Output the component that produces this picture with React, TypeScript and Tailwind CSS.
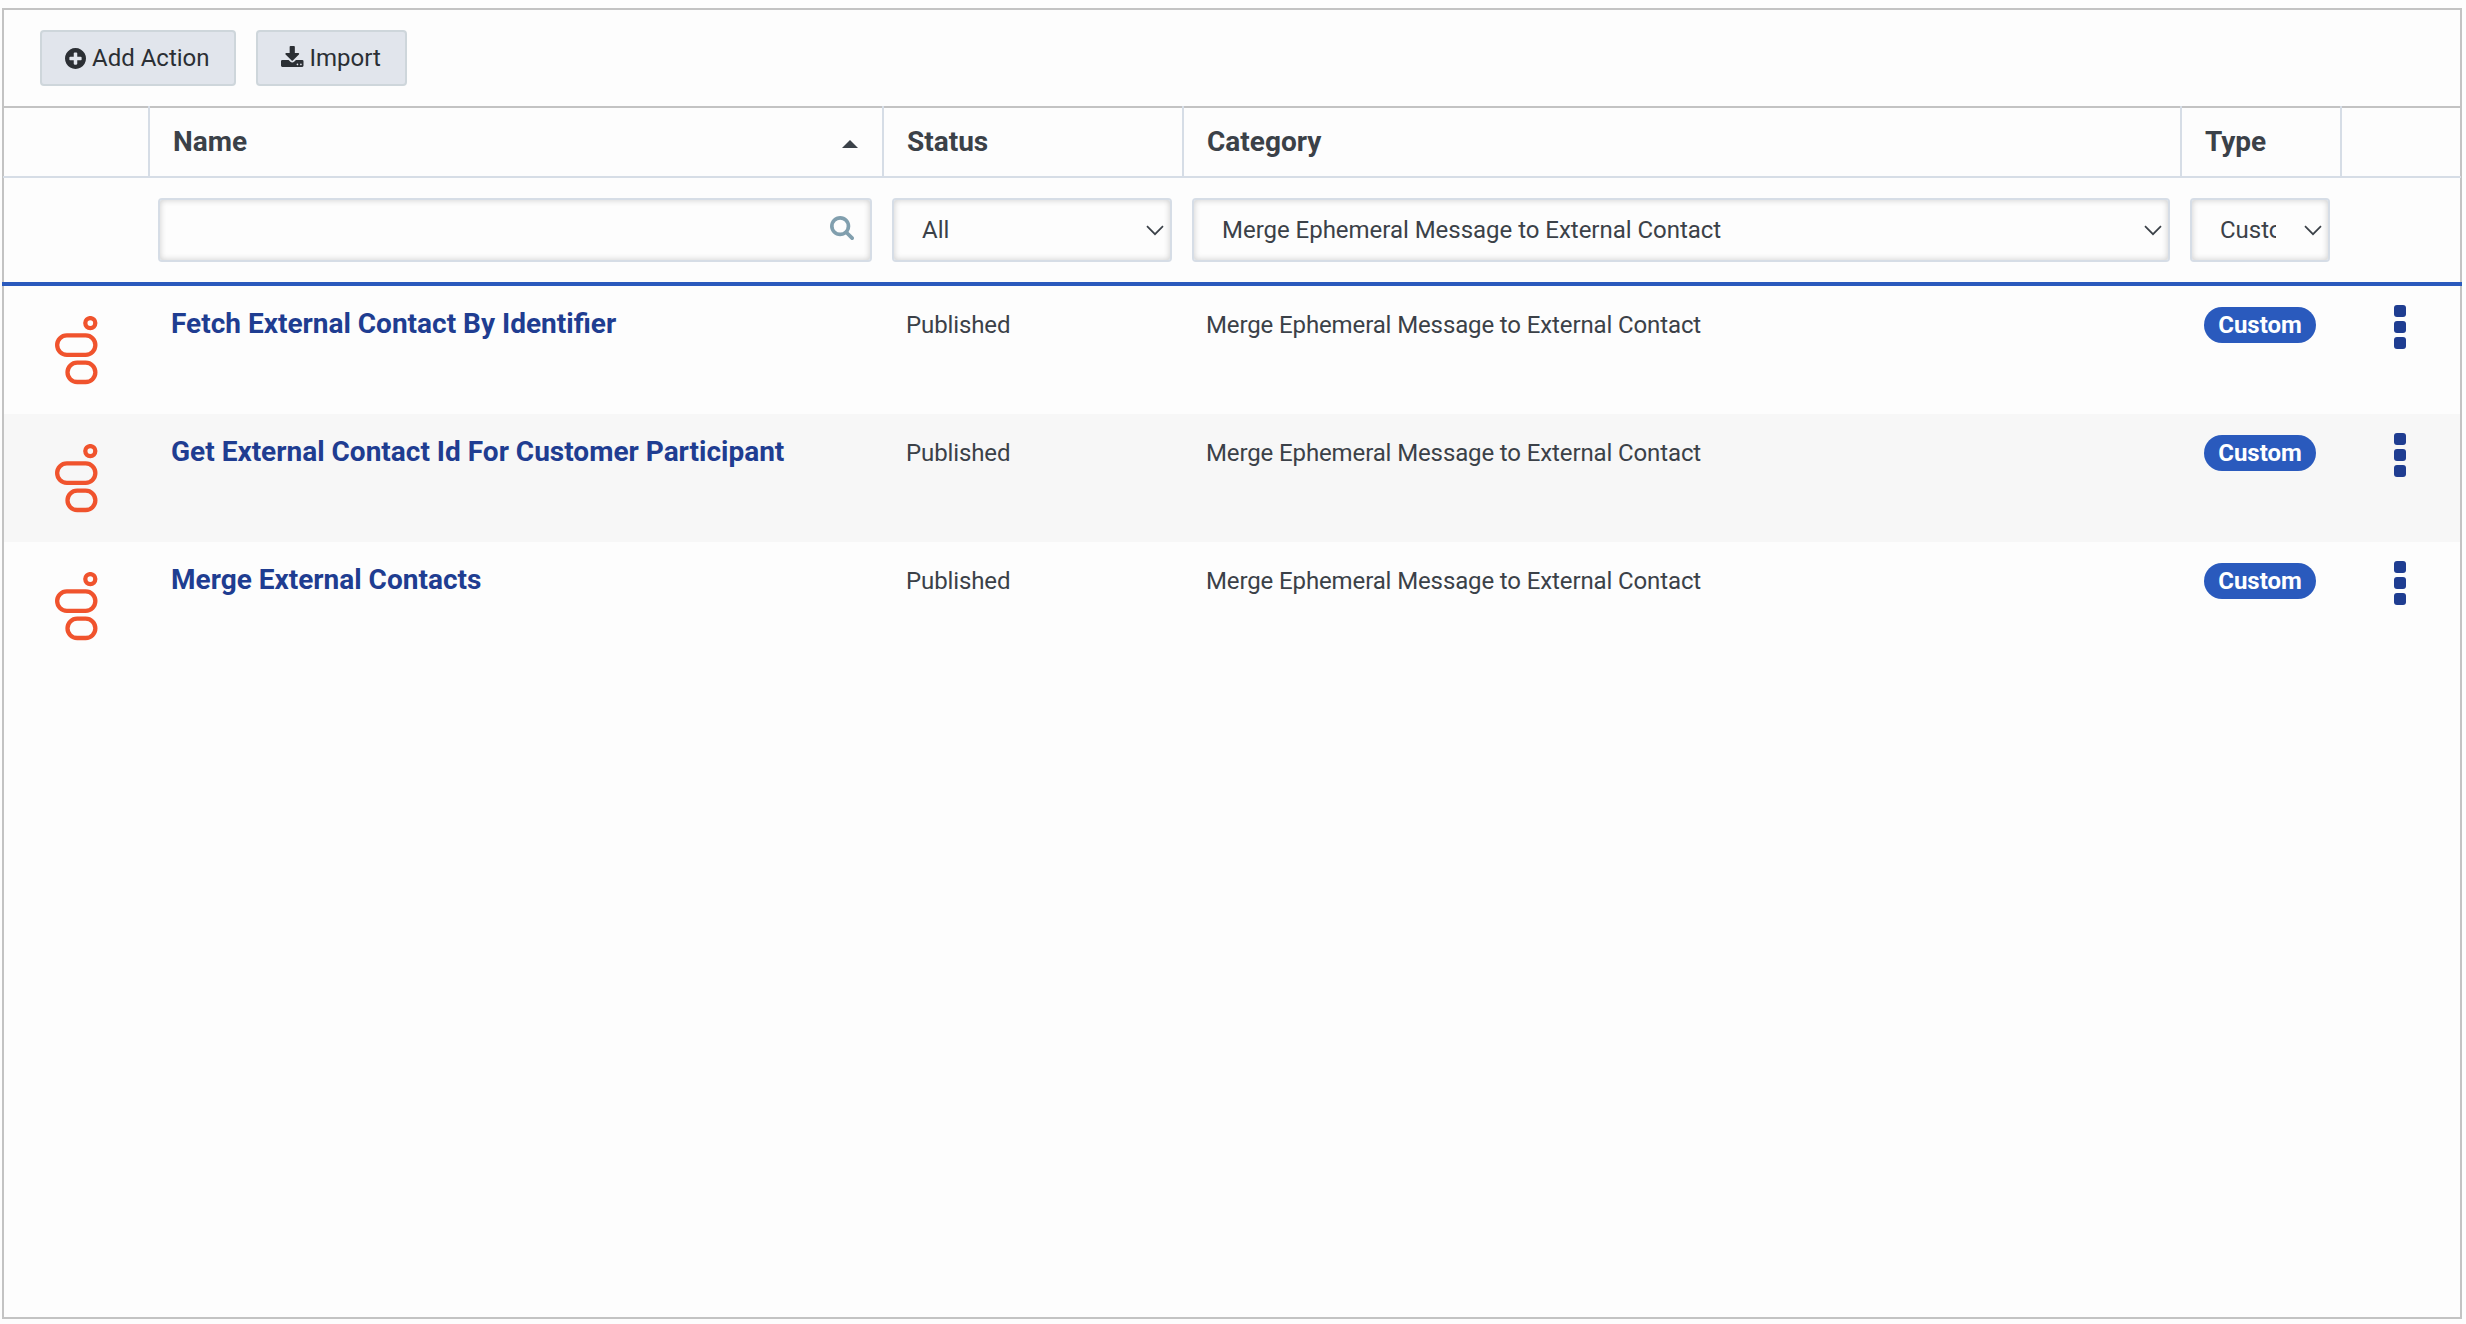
const COLS = "grid grid-cols-[146px_734px_300px_998px_160px_118px]";

type Action = { name: string; status: string; category: string; type: string };

const CATEGORY = "Merge Ephemeral Message to External Contact";

const actions: Action[] = [
  { name: "Fetch External Contact By Identifier", status: "Published", category: CATEGORY, type: "Custom" },
  { name: "Get External Contact Id For Customer Participant", status: "Published", category: CATEGORY, type: "Custom" },
  { name: "Merge External Contacts", status: "Published", category: CATEGORY, type: "Custom" },
];

function PlusCircleIcon() {
  return (
    <svg viewBox="0 0 1536 1536" className="h-[21px] w-[21px] shrink-0" fill="currentColor">
      <path d="M1216 832v-128q0-26-19-45t-45-19h-256v-256q0-26-19-45t-45-19h-128q-26 0-45 19t-19 45v256h-256q-26 0-45 19t-19 45v128q0 26 19 45t45 19h256v256q0 26 19 45t45 19h128q26 0 45-19t19-45v-256h256q26 0 45-19t19-45zm320-64q0 209-103 385.5t-279.5 279.5-385.5 103-385.5-103-279.5-279.5-103-385.5 103-385.5 279.5-279.5 385.5-103 385.5 103 279.5 279.5 103 385.5z" />
    </svg>
  );
}

function DownloadIcon() {
  return (
    <svg viewBox="0 0 1664 1536" className="-mt-[4px] h-[21px] w-[22.5px] shrink-0" fill="currentColor">
      <path d="M1280 1344q0-26-19-45t-45-19-45 19-19 45 19 45 45 19 45-19 19-45zm256 0q0-26-19-45t-45-19-45 19-19 45 19 45 45 19 45-19 19-45zm128-224v320q0 40-28 68t-68 28h-1472q-40 0-68-28t-28-68v-320q0-40 28-68t68-28h465l135 136q58 56 136 56t136-56l136-136h464q40 0 68 28t28 68zm-325-569q17 41-14 70l-448 448q-18 19-45 19t-45-19l-448-448q-31-29-14-70 17-39 59-39h256v-448q0-26 19-45t45-19h256q26 0 45 19t19 45v448h256q42 0 59 39z" />
    </svg>
  );
}

function SearchIcon() {
  return (
    <svg viewBox="0 0 1664 1664" className="-mt-[4px] h-6 w-6 shrink-0 text-[#819fae]" fill="currentColor">
      <path d="M1152 704q0-185-131.5-316.5t-316.5-131.5-316.5 131.5-131.5 316.5 131.5 316.5 316.5 131.5 316.5-131.5 131.5-316.5zm512 832q0 52-38 90t-90 38q-54 0-90-38l-343-342q-179 124-399 124-143 0-273.5-55.5t-225-150-150-225-55.5-273.5 55.5-273.5 150-225 225-150 273.5-55.5 273.5 55.5 225 150 150 225 55.5 273.5q0 220-124 399l343 343q37 37 37 90z" />
    </svg>
  );
}

function ChevronIcon() {
  return (
    <svg viewBox="0 0 18 11" className="h-[11px] w-[18px] shrink-0" fill="none" stroke="#3b4148" strokeWidth="1.7">
      <path d="M1 1.2 9 9.2 17 1.2" />
    </svg>
  );
}

function BrandIcon() {
  return (
    <svg viewBox="0 0 43 69" className="h-[69px] w-[43px]" fill="none" stroke="#f0532d" strokeWidth="4.3">
      <circle cx="35.3" cy="7.1" r="5" />
      <rect x="2.15" y="19.4" width="38.2" height="19.4" rx="9.7" />
      <rect x="12.5" y="46.6" width="27.85" height="19.4" rx="9.7" />
    </svg>
  );
}

function Select({ value }: { value: string }) {
  return (
    <button className="flex h-16 w-full items-center rounded-[4px] border-2 border-[#d6dde6] bg-[#fdfdfd] pl-[28px] pr-[6px] text-left shadow-[inset_0_0_6px_rgba(0,0,0,0.2)]">
      <span className="mr-[28px] min-w-0 flex-1 overflow-hidden tracking-[-0.025px] whitespace-nowrap">{value}</span>
      <ChevronIcon />
    </button>
  );
}

function HeaderCell({ label, sorted }: { label?: string; sorted?: boolean }) {
  return (
    <div className="-mt-[2px] flex items-center justify-between border-r-2 border-[#d6dde6] pl-[23px] pr-6">
      <span className="pt-[2px]">{label}</span>
      {sorted && (
        <svg viewBox="0 0 16 8" className="mt-[5px] h-2 w-4" fill="currentColor">
          <path d="M8 0 16 8H0Z" />
        </svg>
      )}
    </div>
  );
}

function ActionRow({ action }: { action: Action }) {
  return (
    <div className={`${COLS} h-32 even:bg-[#f7f7f7]`}>
      <div className="pl-[51px] pt-[30px]">
        <BrandIcon />
      </div>
      <div className="pl-[21px] pt-[20px] text-[28px] leading-9 font-bold text-[#1f3d91]">{action.name}</div>
      <div className="pl-[22px] pt-[21px] leading-9 tracking-[-0.12px]">{action.status}</div>
      <div className="pl-[22px] pt-[21px] leading-9 tracking-[-0.12px]">{action.category}</div>
      <div className="pl-[22px] pt-[21px]">
        <span className="flex h-9 w-28 items-center justify-center rounded-full bg-[#2a5abd] font-bold text-white">
          {action.type}
        </span>
      </div>
      <button className="flex flex-col gap-1 pl-[52px] pt-[19px]">
        <span className="h-3 w-3 rounded-[3px] bg-[#1f3d91]" />
        <span className="h-3 w-3 rounded-[3px] bg-[#1f3d91]" />
        <span className="h-3 w-3 rounded-[3px] bg-[#1f3d91]" />
      </button>
    </div>
  );
}

export default function App() {
  return (
    <div className="h-[1324px] w-[2466px] bg-[#fdfdfd] pl-[2px] pt-2 font-['Roboto',sans-serif] text-[24px] text-[#3b4148]">
      <div className="h-[1311px] w-[2460px] border-2 border-[#c3c3c3]">
        <div className="flex h-[98px] items-start gap-5 border-b-2 border-[#c3c3c3] pl-9 pt-5 text-[#2b2f34]">
          <button className="flex h-14 w-[196px] items-center gap-[6px] rounded-[4px] border-2 border-[#ced6db] bg-[#e1e5ec] pl-[23px] whitespace-nowrap">
            <PlusCircleIcon />
            <span>Add Action</span>
          </button>
          <button className="flex h-14 w-[151px] items-center gap-[6px] rounded-[4px] border-2 border-[#ced6db] bg-[#e1e5ec] pl-[23px] whitespace-nowrap">
            <DownloadIcon />
            <span>Import</span>
          </button>
        </div>

        <div className={`${COLS} -mx-px h-[70px] border-b-2 border-[#d6dde6] px-px text-[28px] font-bold`}>
          <HeaderCell />
          <HeaderCell label="Name" sorted />
          <HeaderCell label="Status" />
          <HeaderCell label="Category" />
          <HeaderCell label="Type" />
          <div />
        </div>

        <div className={`${COLS} -mx-[2px] h-[108px] border-b-4 border-[#2a5abd] px-[2px] pt-5`}>
          <div />
          <div className="pl-2 pr-3">
            <div className="flex h-16 items-center justify-end rounded-[4px] border-2 border-[#d6dde6] pr-4 shadow-[inset_0_0_6px_rgba(0,0,0,0.2)]">
              <SearchIcon />
            </div>
          </div>
          <div className="pl-2 pr-3">
            <Select value="All" />
          </div>
          <div className="pl-2 pr-3">
            <Select value={CATEGORY} />
          </div>
          <div className="pl-2 pr-3">
            <Select value="Custom" />
          </div>
          <div />
        </div>

        <div>
          {actions.map((action) => (
            <ActionRow key={action.name} action={action} />
          ))}
        </div>
      </div>
    </div>
  );
}
